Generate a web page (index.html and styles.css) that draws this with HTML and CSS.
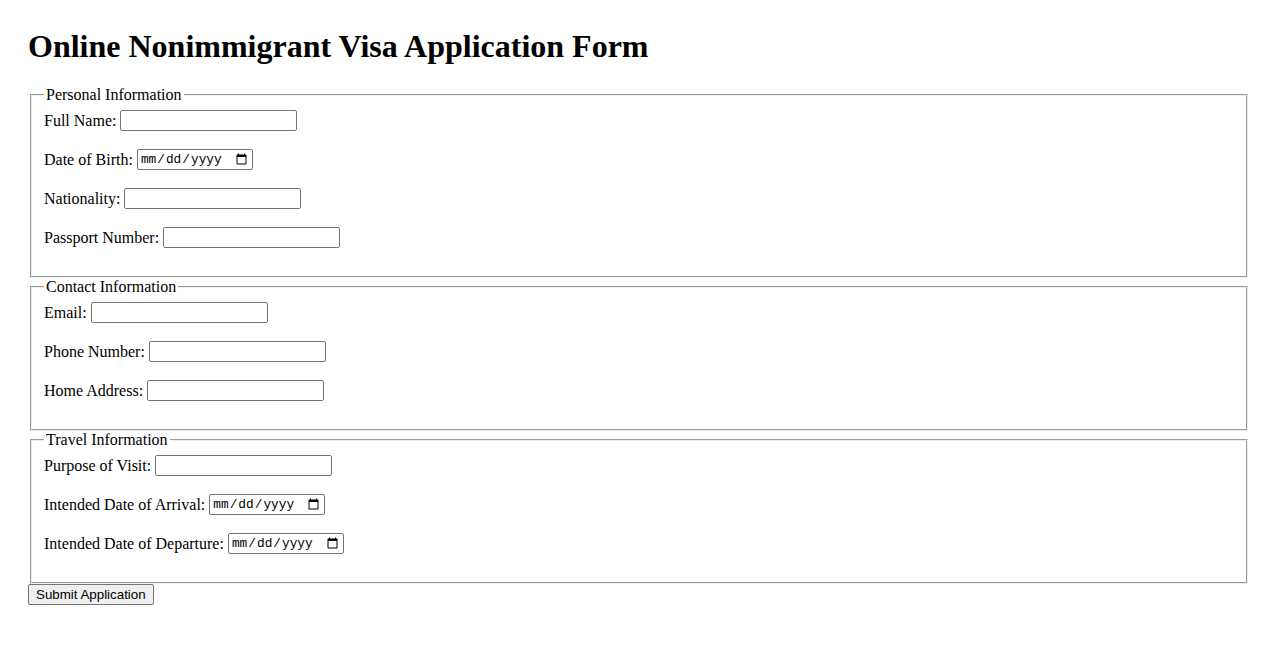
FILE: index.html
```html
<!DOCTYPE html>
<html lang="en">
<head>
<meta charset="utf-8">
<title>Online Nonimmigrant Visa Application Form</title>
<link rel="stylesheet" href="styles.css">
</head>
<body>
<h1 class="title">Online Nonimmigrant Visa Application Form</h1>
<form class="form">
  <fieldset class="group">
    <legend class="group-legend">Personal Information</legend>
    <div class="row"><label for="fullname">Full Name:</label><input class="text-input" type="text" id="fullname"></div>
    <div class="row"><label for="dob">Date of Birth:</label><input class="date-input" type="date" id="dob"></div>
    <div class="row"><label for="nationality">Nationality:</label><input class="text-input" type="text" id="nationality"></div>
    <div class="row"><label for="passport">Passport Number:</label><input class="text-input" type="text" id="passport"></div>
  </fieldset>
  <fieldset class="group">
    <legend class="group-legend">Contact Information</legend>
    <div class="row"><label for="email">Email:</label><input class="text-input" type="email" id="email"></div>
    <div class="row"><label for="phone">Phone Number:</label><input class="text-input" type="tel" id="phone"></div>
    <div class="row"><label for="address">Home Address:</label><input class="text-input" type="text" id="address"></div>
  </fieldset>
  <fieldset class="group">
    <legend class="group-legend">Travel Information</legend>
    <div class="row"><label for="purpose">Purpose of Visit:</label><input class="text-input" type="text" id="purpose"></div>
    <div class="row"><label for="arrival">Intended Date of Arrival:</label><input class="date-input" type="date" id="arrival"></div>
    <div class="row"><label for="departure">Intended Date of Departure:</label><input class="date-input" type="date" id="departure"></div>
  </fieldset>
  <button class="submit" type="submit">Submit Application</button>
</form>
</body>
</html>
```

FILE: styles.css
```css
body {
  margin: 8px;
  padding: 20px;
  font-family: "Liberation Serif", "Times New Roman", serif;
  font-size: 16px;
  color: #000;
  background: #fff;
}
.title {
  font-size: 32px;
  font-weight: bold;
  margin: 0 0 21px;
}
.form {
  margin: 0;
}
.group {
  margin: 0 2px;
  padding: 6px 12px 10px;
  border: 2px groove #eeeeee;
}
.group-legend {
  padding: 0 2px;
}
.row {
  display: flex;
  align-items: center;
  gap: 4px;
  height: 21px;
  margin-bottom: 18px;
}
.text-input,
.date-input {
  box-sizing: border-box;
  height: 21px;
  margin: 0;
  font-family: "Liberation Sans", Arial, sans-serif;
  font-size: 13.33px;
  border: 1px solid #767676;
  border-radius: 2px;
  padding: 1px 2px;
}
.text-input {
  width: 177px;
}
.date-input {
  width: 116px;
  font-family: "Liberation Mono", "Courier New", monospace;
  font-size: 12.8px;
}
.submit {
  box-sizing: border-box;
  display: block;
  height: 21px;
  margin: 0;
  font-family: "Liberation Sans", Arial, sans-serif;
  font-size: 13.33px;
  padding: 1px 7px;
  border: 1px solid #767676;
  border-radius: 2px;
  background: #efefef;
  color: #000;
}
```
